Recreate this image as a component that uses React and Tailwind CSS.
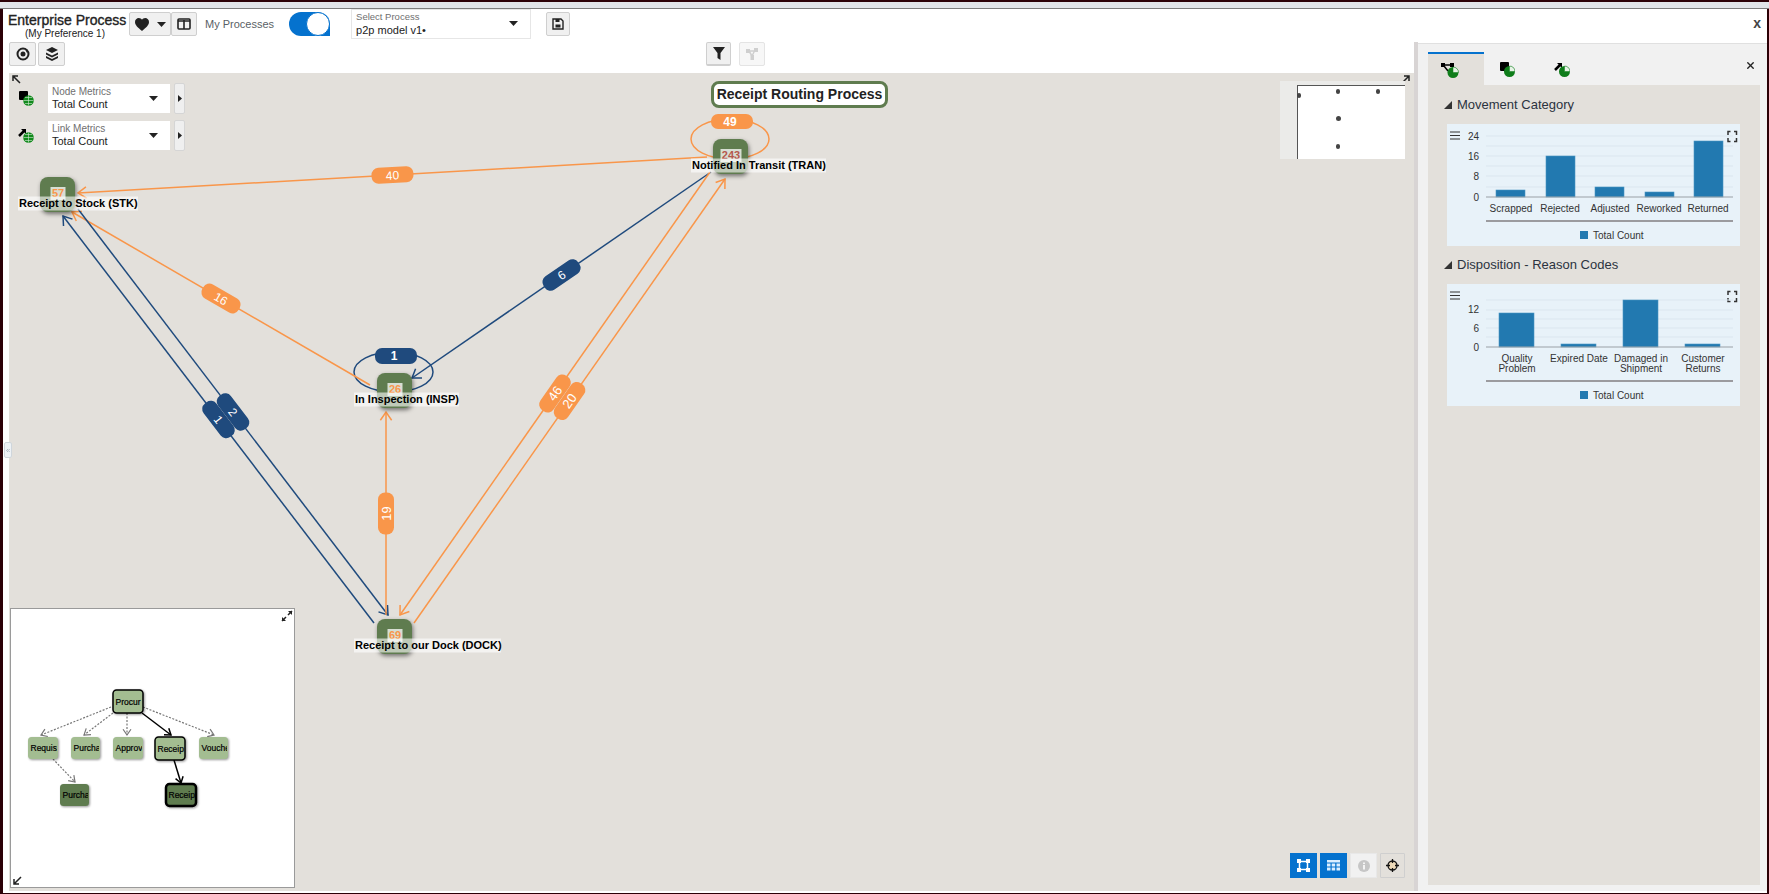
import React from 'react';
import { ChevronsLeft, X } from 'lucide-react';

const ORANGE = '#f9964a';
const NAVY = '#1f4a7d';
const GREEN = '#5f7c4f';

// arrow head drawn as an open chevron ending on the tip
const headPath = (x1, y1, x2, y2, s = 10) => {
    const a = Math.atan2(y2 - y1, x2 - x1);
    const p = (d) => `${x2 - s * Math.cos(a + d)} ${y2 - s * Math.sin(a + d)}`;
    return `M${p(0.6)} L${x2} ${y2} L${p(-0.6)}`;
};

const edges = [
    { from: [707, 157], to: [78, 193], color: ORANGE, label: '40', rot: -3.3, size: 12 },
    { from: [370, 385], to: [72, 212], color: ORANGE, label: '16', rot: 30, size: 12 },
    { from: [711, 172], to: [412, 378], color: NAVY, label: '6', rot: -34.6, size: 12 },
    { from: [374, 623], to: [63, 216], color: NAVY, label: '1', rot: 52.6, size: 12 },
    { from: [78, 209], to: [388, 615], color: NAVY, label: '2', rot: 52.6, size: 12 },
    { from: [386, 615], to: [386, 412], color: ORANGE, label: '19', rot: -90, size: 13 },
    { from: [710, 172], to: [400, 615], color: ORANGE, label: '46', rot: -55, size: 13 },
    { from: [414, 623], to: [725, 179], color: ORANGE, label: '20', rot: -55, size: 13 },
];

const nodes = [
    { x: 40, y: 177, count: '57', name: 'Receipt to Stock (STK)', tx: 18, tw: 120, countColor: ORANGE },
    { x: 713, y: 139, count: '243', name: 'Notified In Transit (TRAN)', tx: 691, tw: 135, countColor: '#b5584c' },
    { x: 377, y: 373, count: '26', name: 'In Inspection (INSP)', tx: 354, tw: 105, countColor: ORANGE },
    { x: 377, y: 619, count: '69', name: 'Receipt to our Dock (DOCK)', tx: 354, tw: 147, countColor: ORANGE },
];

const ProcessGraph = () => (
    <svg className="absolute inset-0 w-full h-full" style={{ fontFamily: '"Liberation Sans", Arial, sans-serif' }}>
        <g transform="translate(-9 -73)">
            <ellipse cx="730" cy="139" rx="39" ry="20" fill="none" stroke={ORANGE} strokeWidth="1.5" />
            <ellipse cx="393.5" cy="372" rx="39.5" ry="20" fill="none" stroke={NAVY} strokeWidth="1.5" />
            {edges.map((e, i) => (
                <g key={i} fill="none" stroke={e.color} strokeWidth="1.5">
                    <line x1={e.from[0]} y1={e.from[1]} x2={e.to[0]} y2={e.to[1]} />
                    <path d={headPath(e.from[0], e.from[1], e.to[0], e.to[1])} />
                </g>
            ))}
            {edges.map((e, i) => {
                const cx = (e.from[0] + e.to[0]) / 2;
                const cy = (e.from[1] + e.to[1]) / 2;
                return (
                    <g key={i} transform={`translate(${cx} ${cy}) rotate(${e.rot})`}>
                        <rect x="-21" y="-8" width="42" height="16" rx="7" fill={e.color} />
                        <text y="4.5" textAnchor="middle" fontSize={e.size} fill="#fff">{e.label}</text>
                    </g>
                );
            })}
            <rect x="711" y="114" width="42" height="15" rx="7" fill={ORANGE} />
            <text x="730" y="126" textAnchor="middle" fontSize="12" fontWeight="bold" fill="#fff">49</text>
            <rect x="375" y="348" width="42" height="16" rx="7" fill={NAVY} />
            <text x="394" y="360" textAnchor="middle" fontSize="12" fontWeight="bold" fill="#fff">1</text>
            {nodes.map((n) => (
                <g key={n.name}>
                    <rect x={n.x} y={n.y} width="35" height="35" rx="8" fill={GREEN} className="[filter:drop-shadow(1px_2px_2px_rgba(0,0,0,0.5))]" />
                    <rect x={n.x + 18 - (n.count.length * 6 + 3) / 2} y={n.y + 10} width={n.count.length * 6 + 3} height="13" fill="#fff" opacity="0.75" />
                    <text x={n.x + 18} y={n.y + 20} textAnchor="middle" fontSize="11" fontWeight="bold" fill={n.countColor}>{n.count}</text>
                    <rect x={n.tx} y={n.y + 19.500} width={n.tw} height="14" fill="#fff" opacity="0.6" />
                    <text x={n.tx + 1} y={n.y + 30} fontSize="11" fontWeight="bold" fill="#000">{n.name}</text>
                </g>
            ))}
        </g>
    </svg>
);

const treeNodes = [
    { x: 113, y: 690, w: 30, h: 23, t: 'Procur', fill: '#a3bd91', b: 1.5 },
    { x: 28, y: 737, w: 30, h: 22, t: 'Requis', fill: '#a3bd91', b: 0 },
    { x: 71, y: 737, w: 29, h: 22, t: 'Purcha', fill: '#a3bd91', b: 0 },
    { x: 113, y: 737, w: 30, h: 22, t: 'Approv', fill: '#a3bd91', b: 0 },
    { x: 155, y: 737, w: 30, h: 23, t: 'Receip', fill: '#a3bd91', b: 1.5 },
    { x: 199, y: 737, w: 29, h: 22, t: 'Vouche', fill: '#a3bd91', b: 0 },
    { x: 60, y: 784, w: 29, h: 22, t: 'Purcha', fill: GREEN, b: 0 },
    { x: 166, y: 784, w: 30, h: 22, t: 'Receip', fill: GREEN, b: 2.5 },
];

const treeEdges = [
    { from: [111, 707], to: [41, 735] },
    { from: [113, 713], to: [84, 735] },
    { from: [127, 713], to: [127, 735] },
    { from: [143, 707], to: [214, 735] },
    { from: [53, 759], to: [75, 782] },
    { from: [142, 713], to: [171, 735], solid: true },
    { from: [174, 760], to: [181, 783], solid: true },
];

const TreeView = () => (
    <svg className="absolute inset-0 w-full h-full" style={{ fontFamily: '"Liberation Sans", Arial, sans-serif' }}>
        <g transform="translate(-11 -609)">
            {treeEdges.map((e, i) => (
                <g key={i} fill="none" stroke={e.solid ? '#000' : '#777'} strokeWidth={e.solid ? 1.5 : 1.2}>
                    <line x1={e.from[0]} y1={e.from[1]} x2={e.to[0]} y2={e.to[1]} strokeDasharray={e.solid ? undefined : '2 1.5'} />
                    <path d={headPath(e.from[0], e.from[1], e.to[0], e.to[1], 7)} />
                </g>
            ))}
            {treeNodes.map((n, i) => (
                <g key={i}>
                    <rect x={n.x} y={n.y} width={n.w} height={n.h} rx="3.5" fill={n.fill} stroke={n.b ? '#000' : 'none'} strokeWidth={n.b} className="[filter:drop-shadow(1px_1px_1px_rgba(0,0,0,0.4))]" />
                    <svg x={n.x} y={n.y} width={n.w - 1} height={n.h}>
                        <text x="2.500" y={n.h / 2 + 3} fontSize="8.500" fill="#000" stroke="#000" strokeWidth="0.2">{n.t}</text>
                    </svg>
                </g>
            ))}
        </g>
    </svg>
);

const ToolButton = ({ className = '', children }) => (
    <button className={`flex items-center justify-center h-6 bg-[#f0f0f0] border border-[#cfcfcf] rounded-[2px] text-[#222] ${className}`}>
        {children}
    </button>
);

const Caret = ({ className = '' }) => (
    <svg width="9" height="5" viewBox="0 0 9 5" className={className}><path d="M0 0h9L4.500 5z" fill="#222" /></svg>
);

const Globe = () => (
    <>
        <circle cx="10.500" cy="10.500" r="5.300" fill="#118a1c" />
        <path d="M5.500 10.500h10M10.500 5.500v10M7 7.500h7M7 13.500h7" stroke="#d5ead5" strokeWidth="0.6" />
    </>
);

const Pie = () => (
    <>
        <circle cx="10.500" cy="10.500" r="5.500" fill="#0f7d1a" />
        <path d="M10.500 10.500V5a5.500 5.500 0 0 1 5.500 5.500z" fill="#e6f3e6" stroke="#0f7d1a" strokeWidth="0.5" />
    </>
);

const NodeIcon = ({ pie = false }) => (
    <svg width="16" height="16" viewBox="0 0 16 16">
        <rect x="1" y="1" width="9" height="9" rx="1" fill="#000" />
        {pie ? <Pie /> : <Globe />}
    </svg>
);

const LinkIcon = ({ pie = false }) => (
    <svg width="16" height="16" viewBox="0 0 16 16">
        <path d="M1 9l5-5" stroke="#000" strokeWidth="2.500" />
        <path d="M3 2h5v5z" fill="#000" />
        {pie ? <Pie /> : <Globe />}
    </svg>
);

const RouteIcon = () => (
    <svg width="19" height="16" viewBox="0 0 19 16">
        <rect x="0" y="1" width="4" height="4" fill="#000" />
        <rect x="9" y="1" width="4" height="4" fill="#000" />
        <path d="M3 3h7M3 4l4 5" stroke="#000" strokeWidth="1.500" />
        <circle cx="12" cy="10.500" r="5.500" fill="#0f7d1a" />
        <path d="M12 10.500V5a5.500 5.500 0 0 1 5.500 5.500z" fill="#e6f3e6" stroke="#0f7d1a" strokeWidth="0.5" />
    </svg>
);

const CornerArrow = ({ rotate, className }) => (
    <svg width="11" height="11" viewBox="0 0 11 11" className={className}>
        <g transform={`rotate(${rotate} 5.500 5.500)`}>
            <path d="M2 2l7 7M2 7V2h5" fill="none" stroke="#222" strokeWidth="1.500" />
        </g>
    </svg>
);

const MetricRow = ({ icon, label }) => (
    <div className="flex items-center h-[30px]">
        <div className="w-[39px] flex justify-center pr-[6px]">{icon}</div>
        <div className="relative w-[122px] h-[29px] bg-white pl-[4px] pt-[2px] leading-none">
            <div className="text-[10px] text-[#6f6f6f] leading-[12px]">{label}</div>
            <div className="text-[11px] text-[#222] leading-[13px]">Total Count</div>
            <Caret className="absolute right-[12px] top-[12px]" />
        </div>
        <div className="ml-[4px] w-[11px] h-[31px] flex items-center justify-center bg-[#efefef] border border-[#d5d5d5] rounded-[2px]">
            <svg width="4" height="7" viewBox="0 0 4 7"><path d="M0 0l4 3.500L0 7z" fill="#222" /></svg>
        </div>
    </div>
);

const ChartCard = ({ card, base, grid, ticks, bars, barW, labels, rule, legendY, legendX }) => (
    <div className="relative bg-[#e8f2f9] w-[293px] ml-[19px]" style={{ height: card.h }}>
        <svg className="absolute inset-0 w-full h-full" style={{ fontFamily: '"Liberation Sans", Arial, sans-serif' }}>
            <g transform={`translate(${-card.x} ${-card.y})`}>
                <path d={`M${card.x + 3} ${card.y + 8}h10M${card.x + 3} ${card.y + 11.5}h10M${card.x + 3} ${card.y + 15}h10`} stroke="#333" strokeWidth="1.2" />
                <path d={`M${card.x + 281} ${card.y + 11}v-3.500h2.500M${card.x + 287} ${card.y + 7.500}h2.500v3.500M${card.x + 289.500} ${card.y + 14}v3.500h-2.500M${card.x + 283.500} ${card.y + 17.500}h-2.500v-3.500`} fill="none" stroke="#333" strokeWidth="1.500" />
                {grid.map((y) => <line key={y} x1="1486" x2="1733" y1={y} y2={y} stroke="#dbe6ef" strokeWidth="1" />)}
                {ticks.map((t) => <text key={t.v} x="1479" y={t.y + 4} textAnchor="end" fontSize="10" fill="#333">{t.v}</text>)}
                {bars.map((b) => <rect key={b.x} x={b.x} y={b.top} width={barW} height={base - b.top} fill="#2279b0" stroke="#4b94c2" strokeWidth="0.6" />)}
                <line x1="1486" x2="1733" y1={base} y2={base} stroke="#9aa0a6" strokeWidth="1" />
                {labels.map((l) => l.lines.map((t, i) => (
                    <text key={t} x={l.x} y={l.y + i * 10} textAnchor="middle" fontSize="10" fill="#333">{t}</text>
                )))}
                <line x1="1486" x2="1733" y1={rule} y2={rule} stroke="#9b9b9f" strokeWidth="2" />
                <rect x={legendX} y={legendY - 4} width="8" height="8" fill="#2279b0" />
                <text x={legendX + 13} y={legendY + 3.5} fontSize="10" fill="#333">Total Count</text>
            </g>
        </svg>
    </div>
);

const SectionTitle = ({ children, className = '' }) => (
    <div className={`flex items-center h-4 ml-[16px] text-[13px] text-[#2b3340] ${className}`}>
        <svg width="8" height="8" viewBox="0 0 8 8" className="mr-[5px]"><path d="M8 0v8H0z" fill="#333" /></svg>
        {children}
    </div>
);

export default function App() {
    return (
        <div className="w-[1769px] h-[894px] flex flex-col overflow-hidden bg-white font-['Liberation_Sans',Arial,sans-serif] text-[#222]">
            <div className="h-[2px] bg-[#2b0006]" />
            <div className="h-[7px] bg-[#e1e4e8] border-b border-[#7d7d7d]" />
            <div className="flex-1 min-h-0 flex flex-col border-l-[3px] border-r-[2px] border-b border-[#2b0006]">
                {/* Header */}
                <div className="h-[33px] flex items-start relative">
                    <div className="ml-[5px] w-[114px] text-center pt-[3px]">
                        <div className="text-[14px] leading-[16px] whitespace-nowrap [-webkit-text-stroke:0.35px_#222]">Enterprise Process</div>
                        <div className="text-[10px] leading-[11px] whitespace-nowrap">(My Preference 1)</div>
                    </div>
                    <ToolButton className="ml-[7px] mt-[3px] w-[42px] gap-[8px]">
                        <svg width="14" height="13" viewBox="0 0 24 22"><path d="M12 22C5 16 0 12 0 6.500 0 3 3 0 6.500 0 9 0 11 1.200 12 3 13 1.200 15 0 17.500 0 21 0 24 3 24 6.500 24 12 19 16 12 22z" fill="#222" /></svg>
                        <Caret />
                    </ToolButton>
                    <ToolButton className="mt-[3px] w-[26px]">
                        <svg width="14" height="12" viewBox="0 0 14 12"><rect x="1" y="1" width="12" height="10" rx="1" fill="none" stroke="#222" strokeWidth="1.600" /><path d="M1 3h12M7 2v9" stroke="#222" strokeWidth="1.600" /></svg>
                    </ToolButton>
                    <span className="ml-[8px] mt-[8px] text-[11px] leading-[14px] text-[#5a5f66] whitespace-nowrap">My Processes</span>
                    {/* toggle, clipped at its bottom edge */}
                    <div className="ml-[15px] mt-[3px] w-[41px] h-6 rounded-t-[12px] rounded-bl-[12px] bg-[#0572ce] relative overflow-hidden">
                        <div className="absolute right-0 top-0 w-6 h-6 rounded-full bg-white border border-[#0572ce]" />
                    </div>
                    <div className="relative ml-[21px] w-[180px] h-[30px] border border-[#e6e6e6] pl-[4px] pt-[1px]">
                        <div className="text-[9.5px] text-[#6f6f6f] leading-[12px]">Select Process</div>
                        <div className="text-[11px] text-[#222] leading-[14px]">p2p model v1•</div>
                        <Caret className="absolute right-[12px] top-[11px]" />
                    </div>
                    <ToolButton className="ml-[15px] mt-[3px] w-6">
                        <svg width="12" height="12" viewBox="0 0 12 12"><path d="M1 1h8l2 2v8H1z" fill="none" stroke="#222" strokeWidth="1.400" /><rect x="3.500" y="1" width="4" height="3" fill="#222" /><rect x="3.500" y="6.500" width="5" height="3" fill="#222" /></svg>
                    </ToolButton>
                    <span className="absolute right-[6px] top-[6px] text-[14px] font-bold leading-[16px] text-[#444]">x</span>
                </div>
                {/* Body */}
                <div className="flex-1 min-h-0 flex pb-[2px]">
                    <div className="w-[1411px] flex flex-col">
                        <div className="h-[31px] flex items-start pl-[6px]">
                            <ToolButton className="w-[27px]">
                                <svg width="14" height="14" viewBox="0 0 14 14"><circle cx="7" cy="7" r="5.500" fill="none" stroke="#222" strokeWidth="2" /><circle cx="7" cy="7" r="2.500" fill="#222" /><path d="M9 2l3 1-1 3z" fill="#222" /></svg>
                            </ToolButton>
                            <ToolButton className="ml-[2px] w-[27px]">
                                <svg width="14" height="14" viewBox="0 0 14 14"><path d="M7 0l6 3-6 3-6-3z" fill="#222" /><path d="M1 5.500l6 3 6-3v2l-6 3-6-3z" fill="#222" /><path d="M1 9l6 3 6-3v2l-6 3-6-3z" fill="#222" /></svg>
                            </ToolButton>
                            <ToolButton className="ml-[641px] w-[25px] border-b-2">
                                <svg width="12" height="13" viewBox="0 0 12 13"><path d="M0 0h12L7.500 6v7l-3-2V6z" fill="#222" /></svg>
                            </ToolButton>
                            <ToolButton className="ml-[8px] w-[26px] bg-[#f7f7f7] border-[#e4e4e4]">
                                <svg width="12" height="12" viewBox="0 0 12 12" fill="#cfcfcf"><rect x="0" y="1" width="4" height="4" /><rect x="8" y="0" width="4" height="4" /><rect x="4.500" y="7" width="3.500" height="5" /><path d="M2 3h8M3 3l3 5M9 2L6 8" stroke="#cfcfcf" strokeWidth="1.500" /></svg>
                            </ToolButton>
                        </div>
                        <div className="flex-1 ml-[6px] bg-[#e3e0db] relative">
                            <ProcessGraph />
                            <CornerArrow rotate={0} className="absolute left-[2px] top-[1px]" />
                            <CornerArrow rotate={90} className="absolute right-[3px] top-[1px]" />
                            {/* process title */}
                            <div className="absolute left-[702px] top-[8px] w-[177px] h-[27px] flex items-center justify-center bg-white border-[3px] border-[#5f7c4f] rounded-[8px] text-[14px] font-bold text-[#222] whitespace-nowrap">
                                Receipt Routing Process
                            </div>
                            {/* metric selectors */}
                            <div className="absolute left-0 top-[10px] flex flex-col gap-[7px]">
                                <MetricRow icon={<NodeIcon />} label="Node Metrics" />
                                <MetricRow icon={<LinkIcon />} label="Link Metrics" />
                            </div>
                            {/* overview thumbnail */}
                            <div className="absolute right-[9px] top-[8px] w-[125px] h-[78px] bg-[#ebebe9] pl-[17px] pt-[4px]">
                                <div className="relative w-full h-[74px] bg-white border-l border-t border-[#555]">
                                    <span className="absolute left-[-1px] top-[7px] w-[4px] h-[5px] rounded-full bg-[#444]" />
                                    <span className="absolute left-[38px] top-[3px] w-[4px] h-[5px] rounded-full bg-[#444]" />
                                    <span className="absolute left-[78px] top-[3px] w-[4px] h-[5px] rounded-full bg-[#444]" />
                                    <span className="absolute left-[38px] top-[30px] w-[5px] h-[5px] rounded-full bg-[#444]" />
                                    <span className="absolute left-[38px] top-[58px] w-[4px] h-[5px] rounded-full bg-[#444]" />
                                </div>
                            </div>
                            {/* hierarchy view */}
                            <div className="absolute left-[1px] bottom-[3px] w-[285px] h-[280px] bg-white border border-[#9a9a9a]">
                                <TreeView />
                                <svg width="12" height="12" viewBox="0 0 12 12" className="absolute right-[1px] top-[1px]">
                                    <path d="M7 5l4-4M5 7l-4 4" stroke="#222" strokeWidth="1.500" /><path d="M7 1h4v4zM1 7v4h4z" fill="#222" />
                                </svg>
                                <CornerArrow rotate={-90} className="absolute left-[1px] bottom-[1px]" />
                            </div>
                            {/* view controls */}
                            <div className="absolute right-[9px] bottom-[13px] flex gap-[3px]">
                                <div className="w-[27px] h-[25px] bg-[#0572ce] flex items-center justify-center">
                                    <svg width="13" height="13" viewBox="0 0 13 13"><rect x="2.500" y="2.500" width="8" height="8" fill="none" stroke="#fff" strokeWidth="1.500" /><path d="M0 0h4v4H0zM9 0h4v4H9zM0 9h4v4H0zM9 9h4v4H9z" fill="#fff" /></svg>
                                </div>
                                <div className="w-[27px] h-[25px] bg-[#0572ce] flex items-center justify-center">
                                    <svg width="13" height="11" viewBox="0 0 13 11" fill="#dbeeff"><rect width="13" height="2.500" /><rect y="3.500" width="3.500" height="3" /><rect x="4.700" y="3.500" width="3.500" height="3" /><rect x="9.500" y="3.500" width="3.500" height="3" /><rect y="7.500" width="3.500" height="3" /><rect x="4.700" y="7.500" width="3.500" height="3" /><rect x="9.500" y="7.500" width="3.500" height="3" /></svg>
                                </div>
                                <div className="w-[27px] h-[25px] bg-[#f1f1f1] border border-[#e8e8e8] flex items-center justify-center">
                                    <svg width="12" height="12" viewBox="0 0 12 12"><circle cx="6" cy="6" r="6" fill="#c6c6c6" /><rect x="5.200" y="5" width="1.600" height="4.500" fill="#fff" /><rect x="5.200" y="2.500" width="1.600" height="1.600" fill="#fff" /></svg>
                                </div>
                                <div className="w-[25px] h-[25px] border border-[#cfcfcf] rounded-[1px] flex items-center justify-center">
                                    <svg width="13" height="13" viewBox="0 0 13 13"><circle cx="6.500" cy="6.500" r="4.500" fill="#ecd9b8" stroke="#111" strokeWidth="1.300" /><path d="M6.500 0v4M6.500 9v4M0 6.500h4M9 6.500h4" stroke="#111" strokeWidth="1.300" /></svg>
                                </div>
                            </div>
                        </div>
                    </div>
                    <div className="w-[4px] bg-[#d8d4d4]" />
                    {/* Right panel */}
                    <div className="flex-1 mt-px bg-[#f1f1f1] border-t border-[#e0e0e0] pl-[10px] pr-[7px] pb-[6px] flex flex-col relative">
                        <X className="absolute right-[11px] top-[16px]" size={11} strokeWidth={3} color="#222" />
                        <div className="flex h-[41px] items-end">
                            <div className="w-[56px] h-[33px] bg-[#e3e0db] border-t-2 border-[#0572ce] flex items-center justify-center pr-[11px]"><RouteIcon /></div>
                            <div className="w-[52px] h-[33px] flex items-center justify-center pr-[7px]"><NodeIcon pie /></div>
                            <div className="w-[60px] h-[33px] flex items-center justify-center pr-[9px]"><LinkIcon pie /></div>
                        </div>
                        <div className="flex-1 bg-[#e3e0db] pt-[12px]">
                            <SectionTitle>Movement Category</SectionTitle>
                            <div className="h-[11px]" />
                            <ChartCard
                                card={{ x: 1447, y: 124, h: 122 }}
                                base={197}
                                grid={[136, 146, 156, 166, 176, 187]}
                                ticks={[{ v: 24, y: 136 }, { v: 16, y: 156 }, { v: 8, y: 176 }, { v: 0, y: 197 }]}
                                barW={29}
                                bars={[{ x: 1496, top: 190 }, { x: 1546, top: 156 }, { x: 1595, top: 187 }, { x: 1645, top: 192 }, { x: 1694, top: 141 }]}
                                labels={[
                                    { x: 1511, y: 212, lines: ['Scrapped'] },
                                    { x: 1560, y: 212, lines: ['Rejected'] },
                                    { x: 1610, y: 212, lines: ['Adjusted'] },
                                    { x: 1659, y: 212, lines: ['Reworked'] },
                                    { x: 1708, y: 212, lines: ['Returned'] },
                                ]}
                                rule={221}
                                legendX={1580}
                                legendY={235}
                            />
                            <SectionTitle className="mt-[11px]">Disposition - Reason Codes</SectionTitle>
                            <div className="h-[11px]" />
                            <ChartCard
                                card={{ x: 1447, y: 284, h: 122 }}
                                base={347}
                                grid={[300, 310, 319, 328, 337]}
                                ticks={[{ v: 12, y: 309 }, { v: 6, y: 328 }, { v: 0, y: 347 }]}
                                barW={35}
                                bars={[{ x: 1499, top: 313 }, { x: 1561, top: 344 }, { x: 1623, top: 300 }, { x: 1685, top: 344 }]}
                                labels={[
                                    { x: 1517, y: 362, lines: ['Quality', 'Problem'] },
                                    { x: 1579, y: 362, lines: ['Expired Date'] },
                                    { x: 1641, y: 362, lines: ['Damaged in', 'Shipment'] },
                                    { x: 1703, y: 362, lines: ['Customer', 'Returns'] },
                                ]}
                                rule={381}
                                legendX={1580}
                                legendY={395}
                            />
                        </div>
                    </div>
                </div>
            </div>
            {/* left collapse tab */}
            <div className="fixed left-[4px] top-[442px] w-[8px] h-4 bg-[#eef2f6] border border-[#cfd6dc] rounded-[2px] flex items-center justify-center">
                <ChevronsLeft size={9} color="#7a8a99" />
            </div>
        </div>
    );
}
